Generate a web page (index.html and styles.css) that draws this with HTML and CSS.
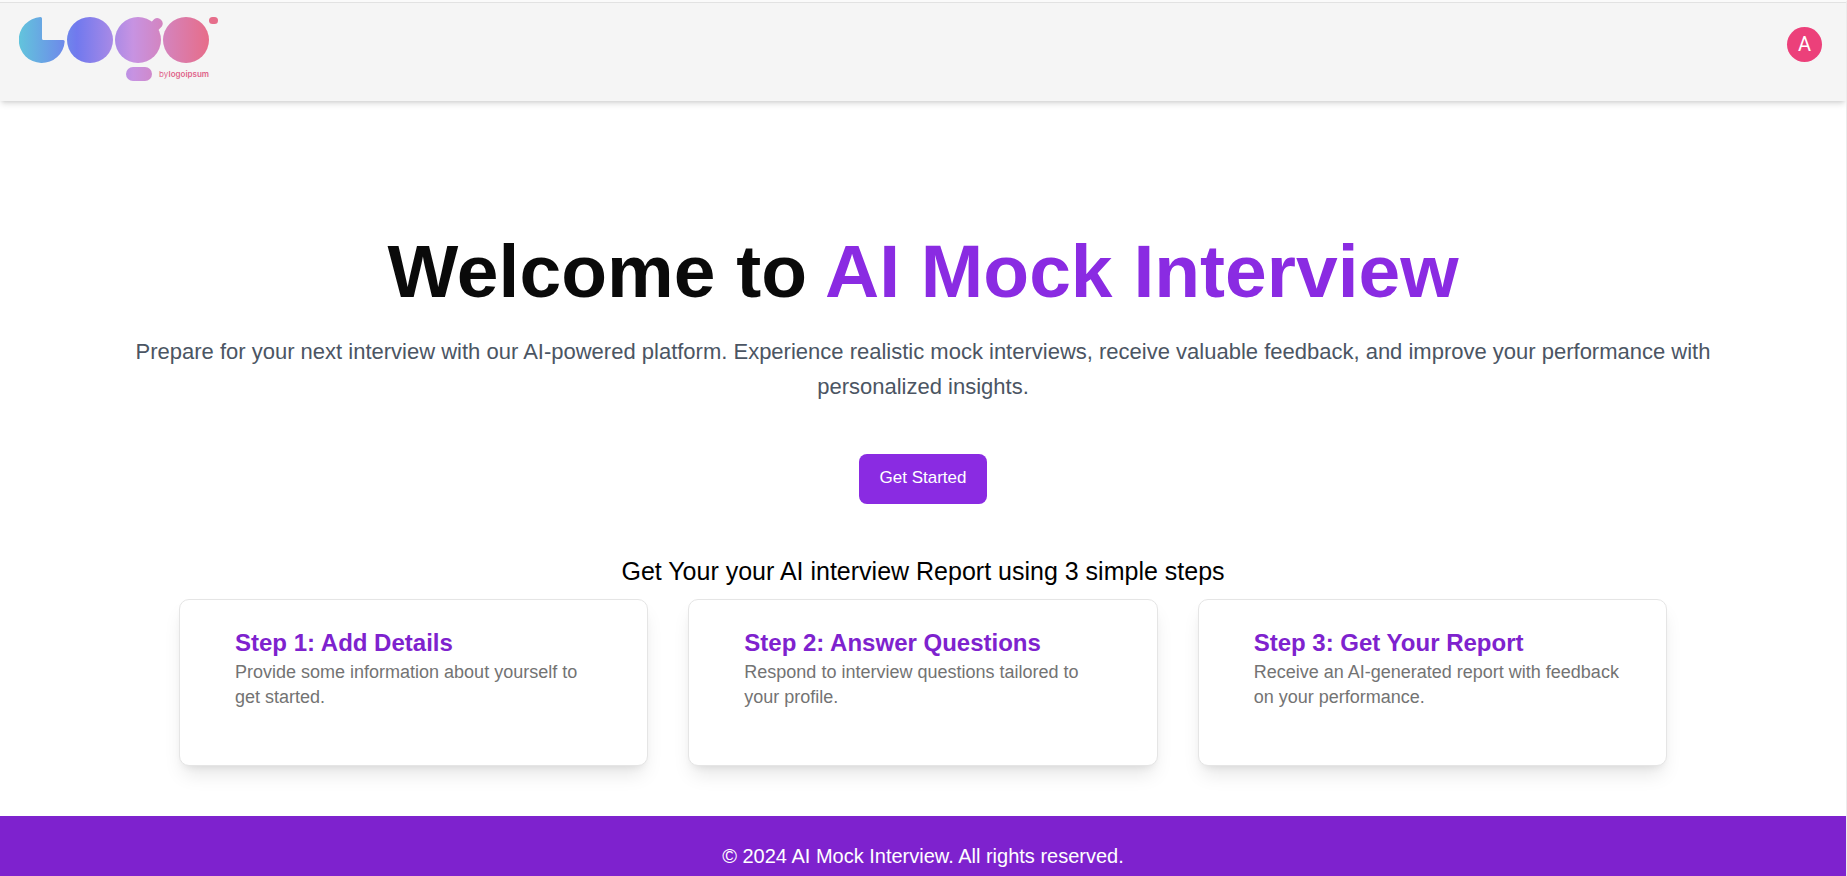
FILE: index.html
```html
<!DOCTYPE html>
<html lang="en">
<head>
<meta charset="utf-8">
<title>AI Mock Interview</title>
<link rel="stylesheet" href="styles.css">
</head>
<body>
<header class="topbar">
  <a class="brand" href="#" aria-label="Home">
    <svg class="logo" viewBox="0 0 200 64" width="200" height="64">
      <defs>
        <linearGradient id="spectrum" gradientUnits="userSpaceOnUse" x1="0" y1="0" x2="200" y2="0">
          <stop offset="0" stop-color="#62c4dc"/>
          <stop offset="0.29" stop-color="#7179ee"/>
          <stop offset="0.57" stop-color="#c793e2"/>
          <stop offset="0.94" stop-color="#e66e8b"/>
          <stop offset="1" stop-color="#e66e8b"/>
        </linearGradient>
      </defs>
      <g fill="url(#spectrum)">
        <path d="M21.500 0A23 23 0 1 0 45.700 24.500Q45.700 23 44.200 23H24.500Q23 23 23 21.500V1.500Q23 0 21.500 0Z"/>
        <circle cx="71" cy="23" r="23"/>
        <circle cx="119" cy="23" r="23"/>
        <path d="M131 6.500L135.300 2A5.500 5.500 0 0 1 142.800 9.600L137.500 15Z"/>
        <circle cx="167" cy="23" r="23"/>
        <rect x="190" y="0" width="9" height="7" rx="3.500"/>
        <rect x="107" y="50" width="26" height="14" rx="7"/>
      </g>
      <text class="logo-by" x="140" y="60">by</text>
      <text class="logo-name" x="190" y="60" text-anchor="end">logoipsum</text>
    </svg>
  </a>
  <button class="avatar" type="button" aria-label="Account">A</button>
</header>
<main class="page">
  <section class="hero">
    <h1 class="title">Welcome to <span class="accent">AI Mock Interview</span></h1>
    <p class="lead">Prepare for your next interview with our AI-powered platform. Experience realistic mock interviews, receive valuable feedback, and improve your performance with personalized insights.</p>
    <button class="cta" type="button">Get Started</button>
  </section>
  <section class="steps">
    <h2 class="steps-title">Get Your your AI interview Report using 3 simple steps</h2>
    <div class="cards">
      <article class="card">
        <h3 class="card-title">Step 1: Add Details</h3>
        <p class="card-text">Provide some information about yourself to get started.</p>
      </article>
      <article class="card">
        <h3 class="card-title">Step 2: Answer Questions</h3>
        <p class="card-text">Respond to interview questions tailored to your profile.</p>
      </article>
      <article class="card">
        <h3 class="card-title">Step 3: Get Your Report</h3>
        <p class="card-text">Receive an AI-generated report with feedback on your performance.</p>
      </article>
    </div>
  </section>
</main>
<footer class="footer">© 2024 AI Mock Interview. All rights reserved.</footer>
</body>
</html>
```
FILE: styles.css
```css
* {
  box-sizing: border-box;
}

body {
  margin: 0;
  min-height: 100vh;
  display: flex;
  flex-direction: column;
  background: #fff;
  color: #0a0a0a;
  font-family: "Liberation Sans", Arial, sans-serif;
  border-top: 2px solid #fafafa;
  border-right: 1px solid #ececec;
}

h1, h2, h3, p {
  margin: 0;
}

.topbar {
  display: flex;
  justify-content: space-between;
  align-items: flex-start;
  padding: 14px 24px 20px 19px;
  background: #f5f5f5;
  border-top: 1px solid #e2e2e2;
  box-shadow: 0 4px 6px -1px rgba(0, 0, 0, 0.12), 0 2px 4px -2px rgba(0, 0, 0, 0.12);
}

.brand,
.logo {
  display: block;
}

.logo-by,
.logo-name {
  font-family: Inter, sans-serif;
  font-size: 8px;
  fill: #e0648a;
}

.logo-name {
  font-weight: 600;
}

.avatar {
  width: 35px;
  height: 35px;
  margin-top: 10px;
  padding: 0;
  border: 0;
  border-radius: 50%;
  background: #ec407a;
  color: #fff;
  font-family: Roboto, sans-serif;
  font-size: 20px;
  font-weight: 400;
  line-height: 35px;
}

.page {
  padding: 133px 100px 50px;
}

.hero {
  display: flex;
  flex-direction: column;
  align-items: center;
  text-align: center;
}

.title {
  font-size: 75px;
  line-height: 75px;
  font-weight: 700;
}

.accent {
  color: #8a2be2;
}

.lead {
  margin-top: 25px;
  font-size: 22px;
  line-height: 35px;
  color: #4b5563;
}

.cta {
  height: 50px;
  margin-top: 50px;
  padding: 0 21px 3px;
  border: 0;
  border-radius: 8px;
  background: #8a2be2;
  color: #fff;
  font-family: inherit;
  font-size: 17px;
}

.steps {
  margin-top: 50px;
}

.steps-title {
  font-size: 25px;
  line-height: 35px;
  font-weight: 400;
  text-align: center;
  color: #000;
}

.cards {
  display: grid;
  grid-template-columns: repeat(3, 1fr);
  gap: 40px;
  padding: 0 79px;
  margin-top: 10px;
}

.card {
  padding: 30px 46px 55px 55px;
  border: 1px solid #e5e5e5;
  border-radius: 10px;
  background: #fff;
  box-shadow: 0 12px 19px -4px rgba(0, 0, 0, 0.1), 0 5px 8px -5px rgba(0, 0, 0, 0.1);
}

.card-title {
  font-size: 24px;
  line-height: 25px;
  font-weight: 700;
  color: #7e22ce;
}

.card-text {
  margin-top: 5px;
  font-size: 18px;
  line-height: 25px;
  color: #737373;
}

.footer {
  flex: 1;
  padding: 25px 0 5px;
  background: #7e22ce;
  color: #fff;
  font-size: 20px;
  line-height: 30px;
  text-align: center;
}
```
